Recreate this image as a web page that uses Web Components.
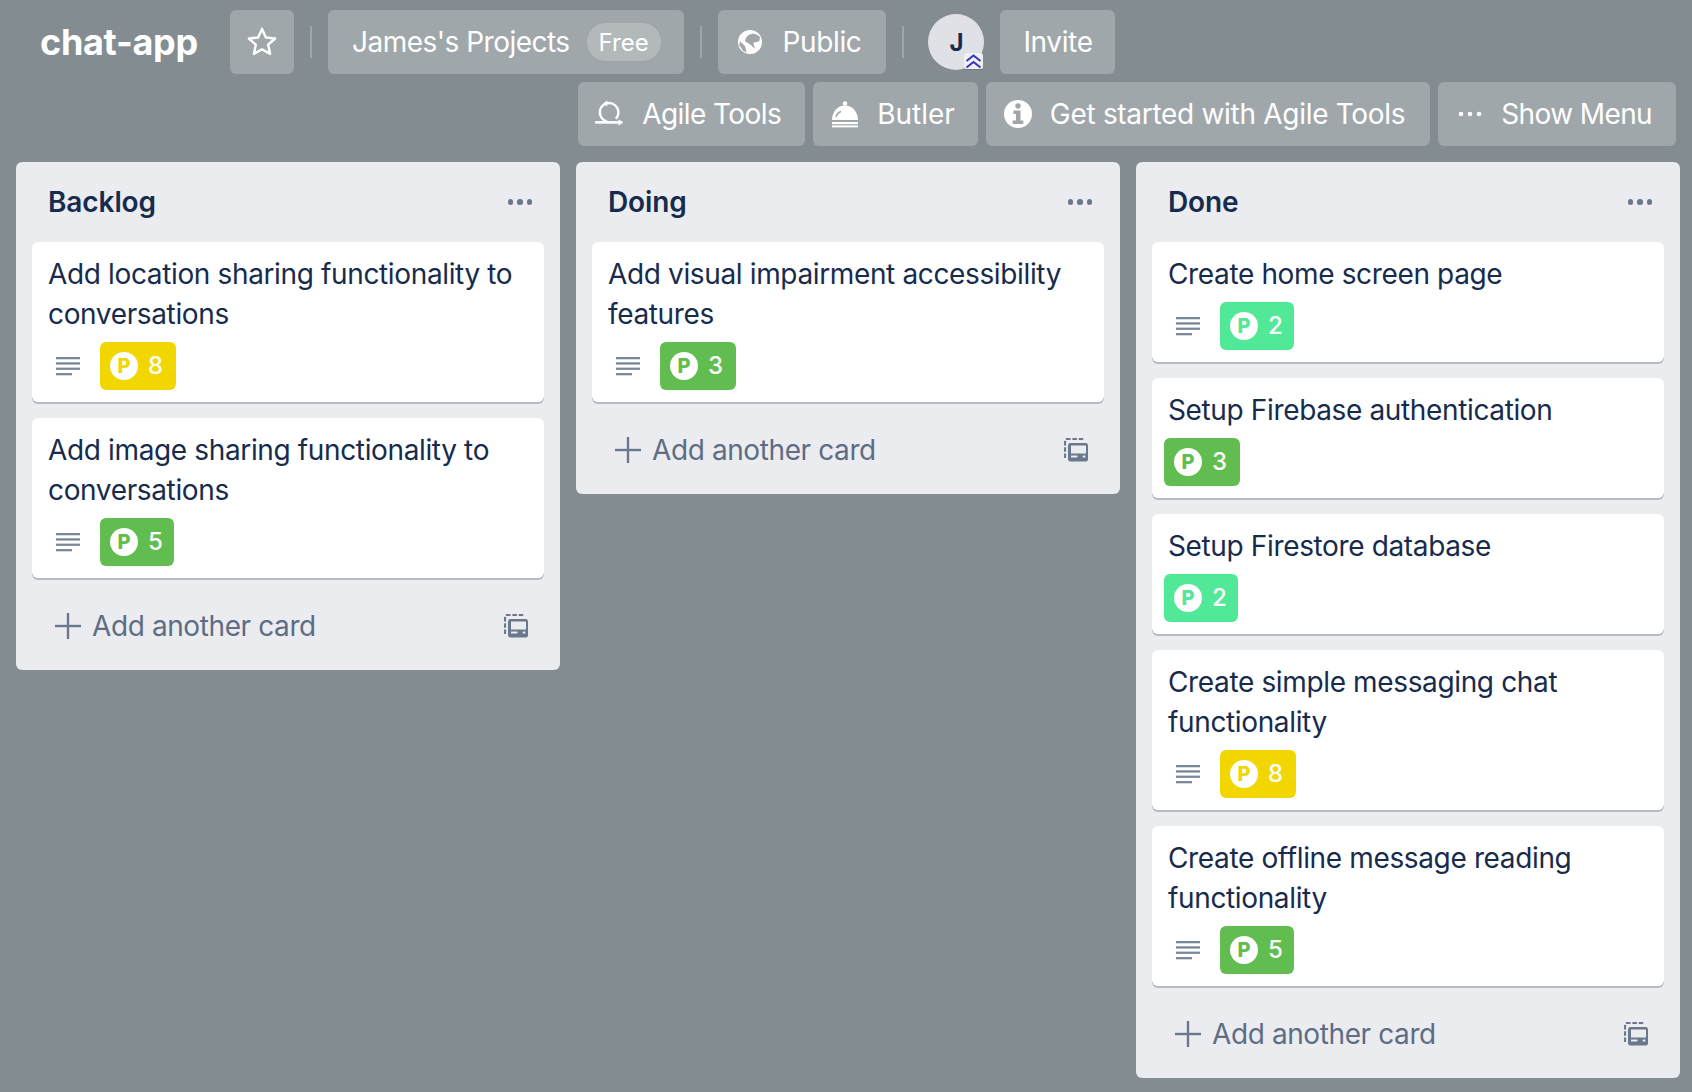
<!DOCTYPE html>
<html lang="en"><head><meta charset="utf-8"><title>chat-app</title>
<style>
html,body{margin:0;padding:0;background:#838c91;height:100%}
body{font-family:Inter,"Liberation Sans",sans-serif;color:#172b4d;overflow:hidden}
</style></head><body>
<trello-page>
  <board-header>
    <span slot="title">chat-app</span>
    <header-btn slot="row1" icon="star" iconly></header-btn>
    <header-div slot="row1"></header-div>
    <header-btn slot="row1" id="proj" style="letter-spacing:-.52px">James's Projects<free-pill slot="extra">Free</free-pill></header-btn>
    <header-div slot="row1"></header-div>
    <header-btn slot="row1" icon="globe" id="pub">Public</header-btn>
    <header-div slot="row1"></header-div>
    <user-avatar slot="row1">J</user-avatar>
    <header-btn slot="row1">Invite</header-btn>
    <header-btn slot="row2" icon="agile" style="letter-spacing:-.56px;--pl:17px;--g:19px">Agile Tools</header-btn>
    <header-btn slot="row2" icon="bell" style="letter-spacing:-.02px;--g:18px;--pr:23px">Butler</header-btn>
    <header-btn slot="row2" icon="info" style="letter-spacing:-.3px;--g:18px;--pr:25px">Get started with Agile Tools</header-btn>
    <header-btn slot="row2" icon="dots" style="letter-spacing:-.62px;--g:17px">Show Menu</header-btn>
  </board-header>
  <board-canvas>
    <board-list name="Backlog">
      <board-card desc points="8" tone="yellow">Add location sharing functionality to conversations</board-card>
      <board-card desc points="5" tone="green">Add image sharing functionality to conversations</board-card>
    </board-list>
    <board-list name="Doing">
      <board-card desc points="3" tone="green">Add visual impairment accessibility features</board-card>
    </board-list>
    <board-list name="Done">
      <board-card desc points="2" tone="mint">Create home screen page</board-card>
      <board-card points="3" tone="green">Setup Firebase authentication</board-card>
      <board-card points="2" tone="mint">Setup Firestore database</board-card>
      <board-card desc points="8" tone="yellow">Create simple messaging chat functionality</board-card>
      <board-card desc points="5" tone="green">Create offline message reading functionality</board-card>
    </board-list>
  </board-canvas>
</trello-page>
<script>
const G='#a0a6a9';
const ICONS={
star:'<svg viewBox="0 0 28 28" width="34" height="34" fill="none" stroke="#fff" stroke-width="2" stroke-linejoin="round"><path d="M14 3.200l3.200 7.100 7.600.8-5.700 5.100 1.600 7.600L14 20l-6.700 3.800 1.600-7.600-5.700-5.100 7.600-.8z"/></svg>',
globe:'<svg viewBox="0 0 24 24" width="24" height="24"><circle cx="12" cy="12" r="12" fill="#fff"/><path fill="'+G+'" d="M7 11.300C7.500 8.500 8.500 6.500 10.300 5.300 12 4 14 3.500 16 3.700 18.500 4.300 20.500 5.500 22 7l-.7 4.300-6 1.400 1.700 6-4.300-4z"/><path fill="'+G+'" d="M2 11.300l5 4.700 1.700 6.700-4-2.400-3.400-5z"/></svg>',
agile:'<svg viewBox="0 0 28 28" width="28" height="28" fill="none" stroke="#fff" stroke-width="2.300"><path d="M12 21.400A9.300 9.300 0 1 1 20.800 18.800"/><path d="M12.500.4L8 3.200l4.200 3z" fill="#fff" stroke="none"/><path d="M0 22.400h24" stroke-width="2.600"/><path d="M23.500 19.400l5 3-5 3z" fill="#fff" stroke="none"/></svg>',
bell:'<svg viewBox="0 0 28 28" width="28" height="28" fill="#fff"><circle cx="14" cy="3.500" r="2.300"/><path d="M1 20C1 11.500 7 5.500 14 5.500S27 11.500 27 20z"/><path d="M5 17Q6 13 10 11.500" fill="none" stroke="'+G+'" stroke-width="1.600"/><rect x="1" y="22" width="26" height="2.200"/><rect x="1" y="25.400" width="26" height="2"/></svg>',
info:'<svg viewBox="0 0 28 28" width="28" height="28"><circle cx="14" cy="14" r="14" fill="#fff"/><circle cx="14" cy="6" r="2.700" fill="'+G+'"/><path fill="'+G+'" d="M9.500 10.500h7v10h2.800v3.500H8.700v-3.500H12v-6.500H9.500z"/></svg>',
dots:'<svg viewBox="0 0 28 28" width="28" height="28" fill="#fff"><circle cx="5" cy="14" r="2.300"/><circle cx="14" cy="14" r="2.300"/><circle cx="23" cy="14" r="2.300"/></svg>'};
function def(name,css,html){customElements.define(name,class extends HTMLElement{
  connectedCallback(){if(this.shadowRoot)return;const r=this.attachShadow({mode:'open'});r.innerHTML='<style>'+css+'</style>'+(typeof html==='function'?html(this):html);}
});}
def('trello-page',':host{display:block;width:1692px;height:1092px;box-sizing:border-box}','<slot></slot>');
def('board-header',`:host{display:block;height:162px;box-sizing:border-box;padding-top:10px}
.r{display:flex;align-items:center;height:64px}
.r1{padding-left:40px}
.r2{margin-top:8px;justify-content:flex-end;padding-right:16px}
.t{font-size:36px;font-weight:700;color:#fff;width:190px;line-height:64px;letter-spacing:-.3px}
::slotted([slot=row2]){margin-left:8px}`,
`<div class="r r1"><div class="t"><slot name="title"></slot></div><slot name="row1"></slot></div><div class="r r2"><slot name="row2"></slot></div>`);
def('header-btn',`:host{display:flex;align-items:center;height:64px;box-sizing:border-box;background:rgba(255,255,255,.24);border-radius:6px;color:#fff;font-size:28px;letter-spacing:-.38px;white-space:nowrap;padding:0 var(--pr,24px) 0 var(--pl,18px)}
:host([noicon]){padding:0 22px 0 23px}
:host([iconly]){width:64px;padding:0;justify-content:center}
:host(#proj){padding:0 23px 0 24px}
:host(#pub){padding:0 25px 0 20px}
.i{display:flex;margin-right:var(--g,19px)}
:host([iconly]) .i{margin:0}
:host(#pub) .i{margin-right:21px}`,
h=>{const n=h.getAttribute('icon');if(!n&&!h.id)h.setAttribute('noicon','');return (n?'<span class="i">'+ICONS[n]+'</span>':'')+'<slot></slot><slot name="extra"></slot>';});
def('free-pill',`:host{display:flex;align-items:center;justify-content:center;width:74px;height:38px;margin-left:17px;border-radius:19px;background:rgba(255,255,255,.2);font-size:24px;letter-spacing:0;color:#fff}`,'<slot></slot>');
def('header-div',':host{display:block;width:2px;height:32px;background:rgba(255,255,255,.24);margin:0 16px}','');
def('user-avatar',`:host{display:flex;position:relative;width:56px;height:56px;border-radius:50%;background:#dfe1e6;color:#172b4d;font-size:24px;font-weight:700;align-items:center;justify-content:center;margin-left:8px;margin-right:16px}
.c{position:absolute;right:1px;bottom:1px;width:19px;height:16px;background:#eef0f3;border-radius:3px 3px 2px 2px;box-shadow:0 1px 0 #6f787d}
svg{display:block;width:19px;height:16px}`,
`<slot></slot><span class="c"><svg viewBox="0 0 19 16" fill="none" stroke="#3434bd" stroke-width="2"><path d="M2.500 8l7-5.500 7 5.500M2.500 14.500l7-5.500 7 5.500"/></svg></span>`);
def('board-canvas',':host{display:flex;align-items:flex-start;gap:16px;padding-left:16px}','<slot></slot>');
def('board-list',`:host{display:block;width:544px;flex:none;background:#ebecf0;border-radius:6px}
.h{display:flex;align-items:center;justify-content:space-between;height:80px;padding:0 28px 0 32px;font-size:28px;font-weight:600;color:#172b4d;letter-spacing:-.1px}
.d{display:flex;gap:4px}.d i{width:5.300px;height:5.300px;border-radius:50%;background:#6b778c;display:block}
.cards{display:flex;flex-direction:column;gap:16px;padding:0 16px}
.f{display:flex;align-items:center;height:88px;margin-top:4px;padding:0 32px 0 38px;color:#5e6c84;font-size:28px;letter-spacing:-.4px}
.p{margin-right:10px;display:flex}.s{flex:1}`,
h=>`<div class="h"><span>${h.getAttribute('name')}</span><span class="d"><i></i><i></i><i></i></span></div><div class="cards"><slot></slot></div>
<div class="f"><span class="p"><svg width="28" height="28" viewBox="0 0 28 28" fill="#6b778c"><rect x="12.800" y="1" width="2.400" height="26"/><rect x="1" y="12.800" width="26" height="2.400"/></svg></span><span class="s">Add another card</span>
<svg width="24" height="24" viewBox="0 0 24 24"><path fill="none" stroke="#6b778c" stroke-width="2.200" stroke-dasharray="4.500 1.800" d="M1 20V3Q1 1 3 1H21"/><rect x="4" y="5" width="20" height="18.500" rx="2.500" fill="#6b778c"/><rect x="7" y="7.500" width="15" height="8" fill="#ebecf0"/><rect x="7" y="17.500" width="6.500" height="2" fill="#ebecf0"/><rect x="18.700" y="17.500" width="2.600" height="2" fill="#ebecf0"/></svg></div>`);
def('board-card',`:host{display:block;background:#fff;border-radius:6px;box-shadow:0 2px 0 #b3bac5;padding:12px 16px 12px;box-sizing:border-box;font-size:28px;line-height:40px;letter-spacing:-.36px;color:#172b4d}
.b{display:flex;align-items:center;height:48px;margin:8px 0 0 -4px;letter-spacing:0}
.dc{display:flex;margin:0 20px 0 12px}`,
h=>{const n=h.getAttribute('points');return `<slot></slot><div class="b">${h.hasAttribute('desc')?'<span class="dc"><svg width="24" height="24" viewBox="0 0 24 24" fill="#7a869a"><rect y="3" width="24" height="2.300"/><rect y="8.300" width="24" height="2.300"/><rect y="13.600" width="24" height="2.300"/><rect y="19" width="16" height="2.300"/></svg></span>':''}<p-badge tone="${h.getAttribute('tone')}"${(n==='2'||n==='5')?' slim':''}>${n}</p-badge></div>`;});
def('p-badge',`:host{display:flex;align-items:center;height:48px;border-radius:6px;padding:0 13px 0 10px;color:#fff;font-size:24px;font-weight:500;line-height:48px}
:host([slim]){padding-right:11px}
:host([tone=yellow]){background:#f2d600;--c:#f2d600}
:host([tone=green]){background:#61bd4f;--c:#61bd4f}
:host([tone=mint]){background:#51e898;--c:#51e898}
.o{width:28px;height:28px;border-radius:50%;background:#fff;color:var(--c);font-size:20px;font-weight:800;display:flex;align-items:center;justify-content:center;margin-right:10px;line-height:1}`,
`<span class="o">P</span><slot></slot>`);
</script>
</body></html>
